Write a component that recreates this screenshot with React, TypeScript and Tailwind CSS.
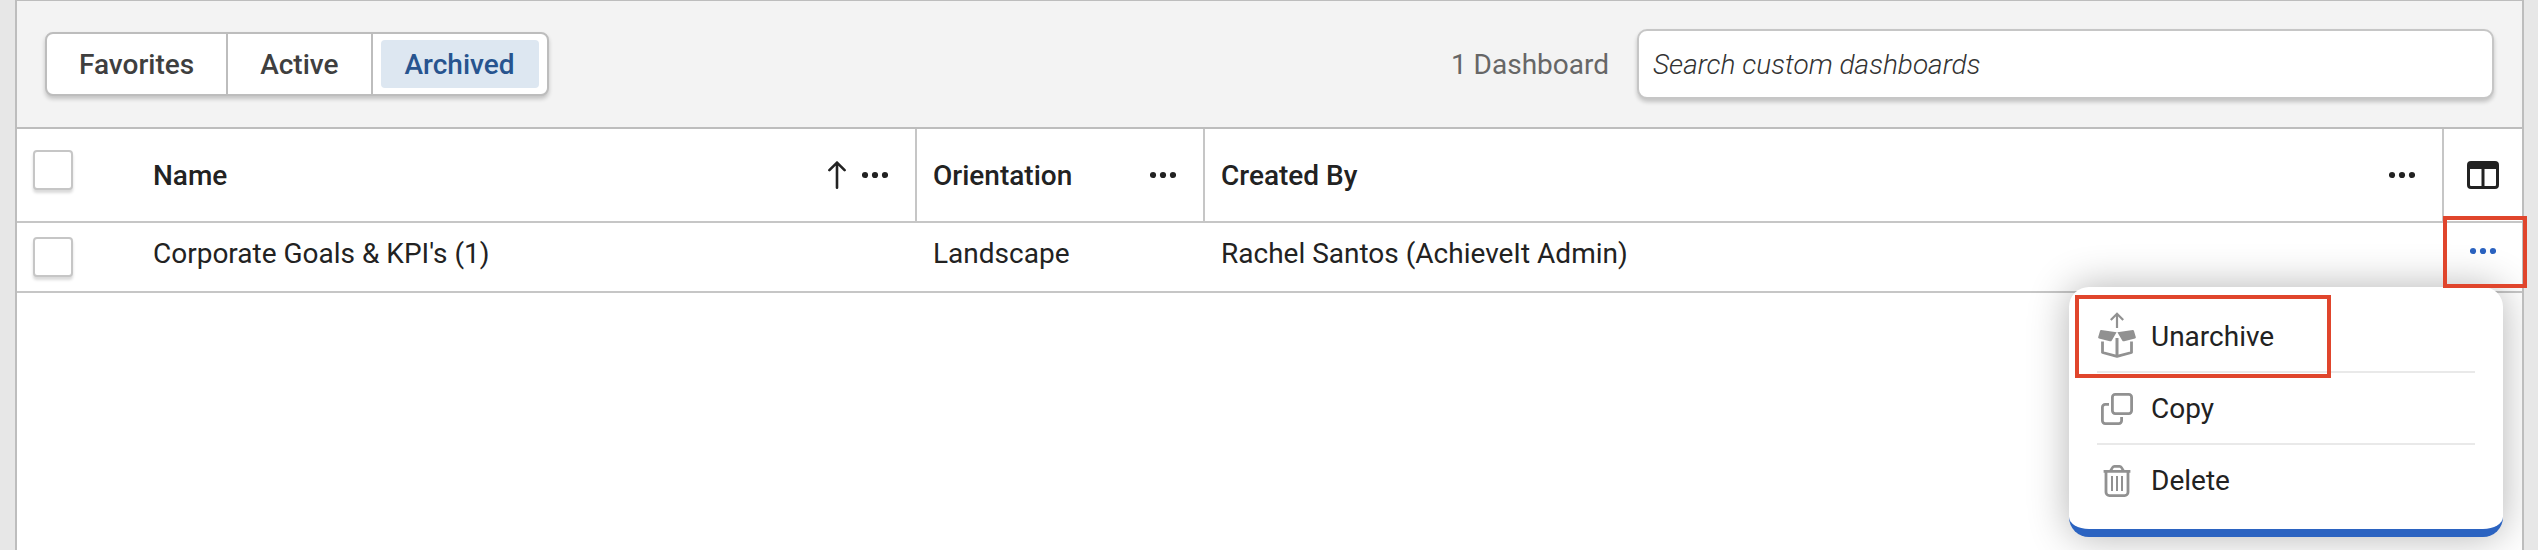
import { useState } from "react";

type Tab = "Favorites" | "Active" | "Archived";

type Dashboard = {
    id: string;
    name: string;
    orientation: string;
    createdBy: string;
};

const TABS: Tab[] = ["Favorites", "Active", "Archived"];

const DASHBOARDS: Dashboard[] = [
    {
        id: "1",
        name: "Corporate Goals & KPI's (1)",
        orientation: "Landscape",
        createdBy: "Rachel Santos (AchieveIt Admin)",
    },
];

function Dots() {
    return (
        <svg width="26" height="8" viewBox="0 0 26 8" fill="currentColor" aria-hidden="true">
            <circle cx="3" cy="4" r="3.1" />
            <circle cx="13" cy="4" r="3.1" />
            <circle cx="23" cy="4" r="3.1" />
        </svg>
    );
}

function SortArrow() {
    return (
        <svg width="18" height="28" viewBox="0 0 18 28" fill="none" stroke="currentColor" strokeWidth="2.6" strokeLinecap="round" strokeLinejoin="round" aria-hidden="true">
            <path d="M9 26.7V1.6M1.4 9.2L9 1.6l7.6 7.6" />
        </svg>
    );
}

function ColumnsIcon() {
    return (
        <svg width="32" height="28" viewBox="0 0 32 28" aria-hidden="true">
            <path
                fill="currentColor"
                fillRule="evenodd"
                d="M4 0h24a4 4 0 0 1 4 4v20a4 4 0 0 1-4 4H4a4 4 0 0 1-4-4V4a4 4 0 0 1 4-4ZM3 8v16a1 1 0 0 0 1 1h10.5V8ZM17.5 8v17H28a1 1 0 0 0 1-1V8Z"
            />
        </svg>
    );
}

function UnarchiveIcon() {
    return (
        <svg width="38" height="46" viewBox="0 0 38 46" fill="none" aria-hidden="true">
            <path d="M19 16V2M12.8 8L19 1.7L25.2 8" stroke="currentColor" strokeWidth="2.2" />
            <path fill="currentColor" d="M3.2 18L18.6 20.2L13.8 28.4Q13.1 29.6 11.8 29.3L1 26.4Q-.2 26 .3 24.8L2 19Q2.3 17.9 3.2 18ZM34.8 18L19.4 20.2L24.2 28.4Q24.9 29.6 26.2 29.3L37 26.4Q38.2 26 37.7 24.8L36 19Q35.7 17.9 34.8 18Z" />
            <path d="M4.5 29.5V40.5L19 44.4L33.5 40.5V29.5" stroke="currentColor" strokeWidth="2.8" strokeLinejoin="round" />
            <path d="M19 26V44" stroke="currentColor" strokeWidth="3" />
        </svg>
    );
}

function CopyIcon() {
    return (
        <svg width="32" height="32" viewBox="0 0 32 32" fill="none" stroke="currentColor" strokeWidth="2.8" aria-hidden="true">
            <rect x="11.4" y="1.4" width="19.2" height="19.2" rx="2.8" />
            <path d="M8 11.4H4.2a2.8 2.8 0 0 0-2.8 2.8v13.6a2.8 2.8 0 0 0 2.8 2.8h13.6a2.8 2.8 0 0 0 2.8-2.8V24" />
        </svg>
    );
}

function TrashIcon() {
    return (
        <svg width="28" height="32" viewBox="0 0 28 32" fill="none" stroke="currentColor" aria-hidden="true">
            <path strokeWidth="2.8" d="M.6 6.4h26.8M3 6.4v20.8a3.4 3.4 0 0 0 3.4 3.4h15.2a3.4 3.4 0 0 0 3.4-3.4V6.4" />
            <path strokeWidth="2.6" d="M7.4 6l2.2-3.6Q10.2 1.4 11.4 1.4h5.2q1.2 0 1.8 1L20.6 6" />
            <path strokeWidth="2" d="M9 11v15M14 11v15M19 11v15" />
        </svg>
    );
}

function Checkbox(props: { label: string }) {
    return (
        <input
            type="checkbox"
            aria-label={props.label}
            className="block size-10 appearance-none rounded-sm border-2 border-[#c6c6c6] bg-white shadow-[0_3px_3px_rgba(0,0,0,0.15)] checked:bg-[#2b63c1]"
        />
    );
}

function ColumnHeader(props: { title: string; sorted?: boolean; className?: string }) {
    return (
        <th scope="col" aria-sort={props.sorted ? "ascending" : undefined} className={`border-r-2 border-b-2 border-[#c6c6c6] pr-[27px] pl-4 text-left font-medium ${props.className ?? ""}`}>
            <div className="flex items-center">
                <span className="flex-1 pt-[2px]">{props.title}</span>
                {props.sorted && <SortArrow />}
                <button aria-label={`${props.title} options`} className="ml-4">
                    <Dots />
                </button>
            </div>
        </th>
    );
}

const MENU = [
    { label: "Unarchive", Icon: UnarchiveIcon, iconClass: "pb-1" },
    { label: "Copy", Icon: CopyIcon, iconClass: "" },
    { label: "Delete", Icon: TrashIcon, iconClass: "" },
];

function RowMenu() {
    return (
        <div className="absolute top-16 right-[19px] z-10 w-[434px] rounded-[20px] border-b-8 border-[#2b63c1] bg-white px-7 py-[14px] shadow-[0_0_40px_rgba(0,0,0,0.3)]">
            <ul>
                {MENU.map(({ label, Icon, iconClass }) => (
                    <li key={label} className="border-b-2 border-[#e9e9e9] last:border-b-0">
                        <button className="flex h-[70px] w-full items-center gap-[14px] pt-[2px] text-left">
                            <span className={`flex w-10 justify-center text-[#919191] ${iconClass}`}>
                                <Icon />
                            </span>
                            {label}
                        </button>
                    </li>
                ))}
            </ul>
            <div className="pointer-events-none absolute top-2 left-[6px] h-[83px] w-64 border-4 border-[#e0452c]" />
        </div>
    );
}

export default function App() {
    const [tab, setTab] = useState<Tab>("Archived");
    const [search, setSearch] = useState("");

    const rows = DASHBOARDS.filter((d) => d.name.toLowerCase().includes(search.toLowerCase()));

    return (
        <div className="flex min-h-screen bg-[#e7e7e7] pr-[14px] pl-[15px] font-[Roboto,sans-serif] text-[28px] leading-10 text-[#222]">
            <main className="relative flex flex-1">
                <div className="flex-1 overflow-hidden border-x-2 border-t border-[#bdbdbd] bg-white">
                    <div className="flex items-center border-b-2 border-[#bdbdbd] bg-[#f3f3f3] p-7">
                        <div className="flex h-16 divide-x-2 divide-[#bdbdbd] rounded-lg border-2 border-[#bdbdbd] bg-white font-medium text-[#3f3f3f] shadow-[0_3px_4px_rgba(0,0,0,0.2)]">
                            {TABS.map((t) => (
                                <button key={t} aria-pressed={t === tab} onClick={() => setTab(t)} className="px-2">
                                    <span className={`block rounded-sm px-6 pt-[5px] pb-[3px] ${t === tab ? "bg-[#dde7f1] text-[#27548f]" : ""}`}>{t}</span>
                                </button>
                            ))}
                        </div>
                        <label htmlFor="search" className="ml-auto pt-[2px] text-[#666]">
                            {rows.length} Dashboard
                        </label>
                        <input
                            id="search"
                            type="text"
                            value={search}
                            onChange={(e) => setSearch(e.target.value)}
                            placeholder="Search custom dashboards"
                            className="ml-7 h-[70px] w-[857px] rounded-[10px] border-2 border-[#c6c6c6] bg-white px-[14px] shadow-[0_3px_4px_rgba(0,0,0,0.2)] outline-0 placeholder:font-light placeholder:text-[#333] placeholder:italic"
                        />
                    </div>

                    <table className="w-full table-fixed border-separate border-spacing-0">
                        <thead>
                            <tr className="h-[94px]">
                                <th className="w-[120px] border-b-2 border-[#c6c6c6] pt-[21px] pl-4 align-top">
                                    <Checkbox label="Select all dashboards" />
                                </th>
                                <ColumnHeader title="Name" sorted className="w-[780px]" />
                                <ColumnHeader title="Orientation" className="w-72" />
                                <ColumnHeader title="Created By" />
                                <th className="w-[78px] border-b-2 border-[#c6c6c6]">
                                    <button aria-label="Choose columns" className="mx-auto block">
                                        <ColumnsIcon />
                                    </button>
                                </th>
                            </tr>
                        </thead>
                        <tbody>
                            {rows.map((d) => (
                                <tr key={d.id} className="h-[70px] align-top *:border-b-2 *:border-[#c6c6c6]">
                                    <td className="pt-[14px] pl-4">
                                        <Checkbox label={`Select ${d.name}`} />
                                    </td>
                                    <td className="px-4 pt-[11px]">{d.name}</td>
                                    <td className="px-4 pt-[11px]">{d.orientation}</td>
                                    <td className="px-4 pt-[11px]">{d.createdBy}</td>
                                    <td className="relative pt-2">
                                        <button aria-label={`${d.name} actions`} aria-expanded="true" className="flex h-10 w-full items-center justify-center text-[#2b63c1]">
                                            <Dots />
                                        </button>
                                        <RowMenu />
                                    </td>
                                </tr>
                            ))}
                        </tbody>
                    </table>
                </div>
                <div className="pointer-events-none absolute top-[216px] -right-[3px] z-20 h-[72px] w-[84px] border-4 border-[#e0452c]" />
            </main>
        </div>
    );
}
